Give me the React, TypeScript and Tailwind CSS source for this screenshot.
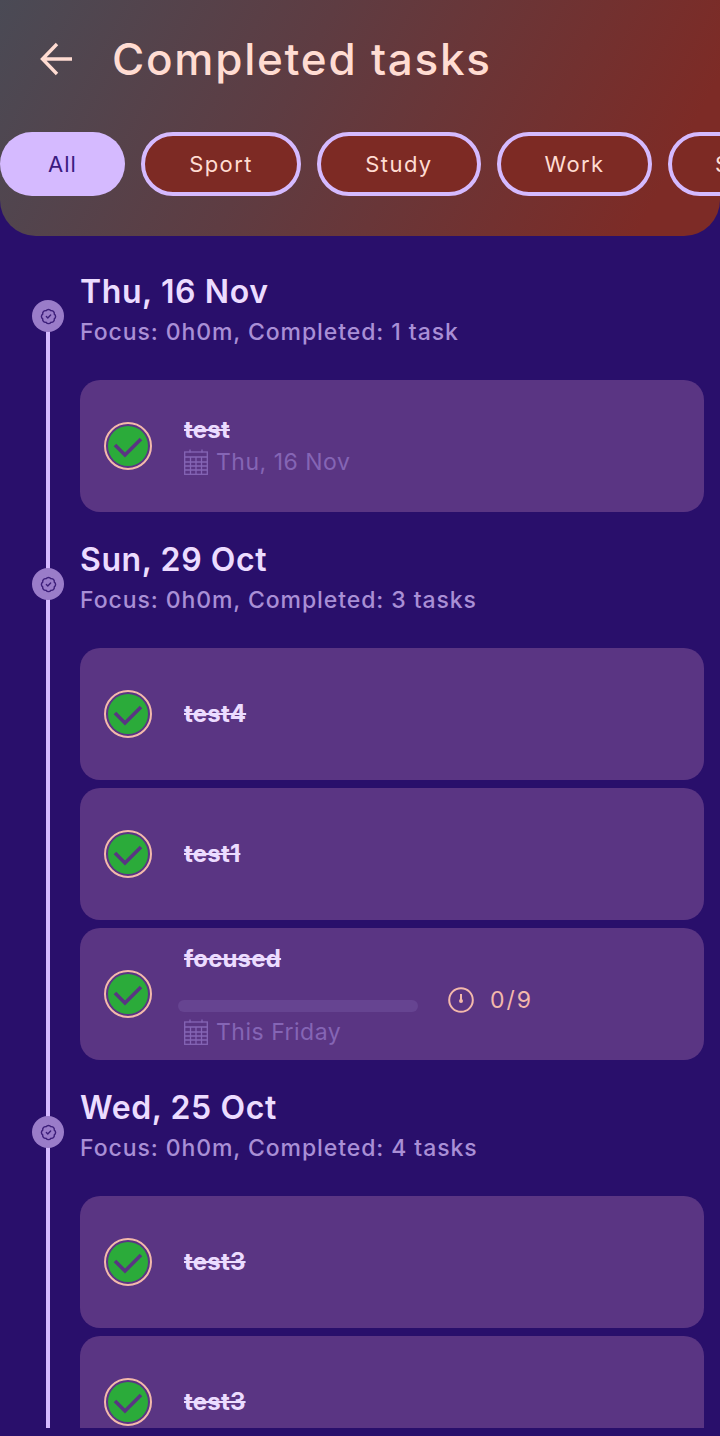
import { BadgeCheck } from "lucide-react"

type Task = { title: string; date?: string; focus?: boolean }
type Day = { date: string; summary: string; tasks: Task[] }

const filters = [
  { label: "Sport", size: "w-[160px]" },
  { label: "Study", size: "w-[164px]" },
  { label: "Work", size: "w-[155px]" },
  { label: "Self", size: "w-[140px]" },
]

const days: Day[] = [
  { date: "Thu, 16 Nov", summary: "Focus: 0h0m, Completed: 1 task", tasks: [{ title: "test", date: "Thu, 16 Nov" }] },
  {
    date: "Sun, 29 Oct",
    summary: "Focus: 0h0m, Completed: 3 tasks",
    tasks: [{ title: "test4" }, { title: "test1" }, { title: "focused", date: "This Friday", focus: true }],
  },
  { date: "Wed, 25 Oct", summary: "Focus: 0h0m, Completed: 4 tasks", tasks: [{ title: "test3" }, { title: "test3" }] },
]

function CheckCircle() {
  return (
    <div className="flex h-12 w-12 shrink-0 items-center justify-center rounded-full border-2 border-[#f4b9ab] bg-[#5a3583]">
      <div className="flex h-[40px] w-[40px] items-center justify-center rounded-full bg-[#2bab3a]">
        <svg width="32" height="32" viewBox="0 0 32 32" fill="none" stroke="#5a3583" strokeWidth="3.6">
          <path d="M3 15l10 10L29 9" />
        </svg>
      </div>
    </div>
  )
}

function CalendarIcon() {
  return (
    <svg width="24" height="26" viewBox="0 0 24 26" fill="none" stroke="#8565b5" strokeWidth="1.3" className="shrink-0">
      <rect x="0.7" y="3" width="22.6" height="22.3" />
      <path d="M6 0.5v3M18 0.5v3M0.7 8h22.6M0.7 13h22.6M0.7 17h22.6M0.7 21h22.6M6.5 8v17M12 8v17M17.5 8v17" />
    </svg>
  )
}

function TimerIcon() {
  return (
    <svg width="26" height="26" viewBox="0 0 26 26" fill="none" stroke="#f4b9ab" strokeWidth="2" className="shrink-0">
      <circle cx="13" cy="13" r="11.8" />
      <path d="M13 7v6" />
      <circle cx="13" cy="14" r="1" fill="#f4b9ab" />
    </svg>
  )
}

function DateLine({ text }: { text: string }) {
  return (
    <div className="flex items-center gap-2 text-[23px] leading-[30px] tracking-[0.5px] text-[#8565b5]">
      <CalendarIcon />
      <span>{text}</span>
    </div>
  )
}

function TaskCard({ task }: { task: Task }) {
  return (
    <div className="flex h-[132px] items-center rounded-[20px] bg-[#5a3583] pl-6">
      <CheckCircle />
      {task.focus ? (
        <div className="ml-[26px] flex flex-col pt-[3px]">
          <div className="ml-[6px] text-[24px] leading-[30px] tracking-[0.2px] font-bold text-[#ecdcff] line-through">{task.title}</div>
          <div className="mt-[13px] flex h-[26px] items-start">
            <div className="mt-[13px] h-3 w-[240px] rounded-full bg-[#664491]" />
            <div className="ml-[30px]"><TimerIcon /></div>
            <span className="ml-[16px] text-[23px] leading-[26px] tracking-[2px] text-[#f4b9ab]">0/9</span>
          </div>
          <div className="ml-[6px] mt-1"><DateLine text={task.date ?? ""} /></div>
        </div>
      ) : (
        <div className="ml-8 flex flex-col">
          <div className="text-[24px] leading-[30px] tracking-[0.2px] font-bold text-[#ecdcff] line-through">{task.title}</div>
          {task.date && <div className="mt-[2px]"><DateLine text={task.date} /></div>}
        </div>
      )}
    </div>
  )
}

export default function App() {
  return (
    <div className="h-[1436px] w-[720px] overflow-hidden bg-[#290f6b] font-['Inter','Liberation_Sans',sans-serif]">
      <div className="relative h-[1428px] overflow-hidden">
        <header className="h-[236px] rounded-b-[36px] bg-[linear-gradient(118deg,#4a4a55_0%,#5e3c42_40%,#7d2b26_90%)]">
          <div className="flex h-[132px] items-center pb-[14px] pl-10">
            <svg width="34" height="34" viewBox="0 0 34 34" fill="none" stroke="#ffdcd2" strokeWidth="3.4" className="shrink-0">
              <path d="M32 17H3M17 2L2.5 17 17 32" />
            </svg>
            <h1 className="ml-[38px] text-[44px] font-medium tracking-[1.75px] text-[#ffdcd2]">Completed tasks</h1>
          </div>
          <div className="flex gap-4 overflow-hidden">
            <div className="flex h-16 w-[125px] shrink-0 items-center justify-center rounded-full bg-[#d5baff] text-[22px] tracking-[1px] text-[#3a1a80]">
              All
            </div>
            {filters.map((f) => (
              <div
                key={f.label}
                className={`flex h-16 shrink-0 items-center justify-center rounded-full border-4 border-[#d5baff] bg-[#7d2a24] text-[22px] tracking-[1.4px] text-[#ffdcd2] ${f.size}`}
              >
                {f.label}
              </div>
            ))}
          </div>
        </header>

        {/* timeline rail */}
        <div className="absolute left-[46px] top-[316px] bottom-0 w-1 bg-[#d5baff]" />

        <main className="pl-20 pr-4 pt-9">
          {days.map((day) => (
            <section key={day.date} className="mb-7">
              <div className="relative h-[76px]">
                <div className="absolute -left-12 top-7 flex h-8 w-8 items-center justify-center rounded-full bg-[#9a7cc9]">
                  <BadgeCheck size={17} color="#3d1f7a" strokeWidth={2} />
                </div>
                <h2 className="text-[32px] leading-[40px] tracking-[0.6px] font-semibold text-[#ecdcff]">{day.date}</h2>
                <p className="text-[23px] leading-[40px] tracking-[0.92px] font-medium text-[#a98fd6]">{day.summary}</p>
              </div>
              <div className="mt-8 flex flex-col gap-2">
                {day.tasks.map((t, i) => (
                  <TaskCard key={i} task={t} />
                ))}
              </div>
            </section>
          ))}
        </main>
      </div>
    </div>
  )
}
